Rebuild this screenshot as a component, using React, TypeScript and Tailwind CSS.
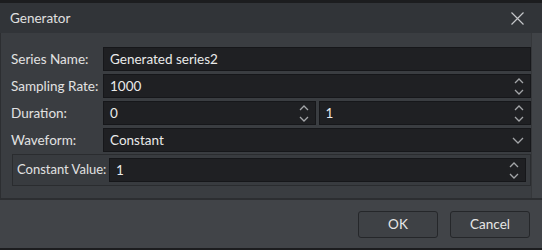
function Spin() {
  return (
    <div className="flex flex-col items-center justify-center gap-[5px] pr-[6px]">
      <svg width="10" height="6" viewBox="0 0 10 6" className="text-[#a3a5a8]">
        <path d="M1 5 L5 1 L9 5" fill="none" stroke="currentColor" strokeWidth="1.3" />
      </svg>
      <svg width="10" height="6" viewBox="0 0 10 6" className="text-[#a3a5a8]">
        <path d="M1 1 L5 5 L9 1" fill="none" stroke="currentColor" strokeWidth="1.3" />
      </svg>
    </div>
  );
}

function Field({ value, spin, drop, className = "" }: { value: string; spin?: boolean; drop?: boolean; className?: string }) {
  return (
    <div
      className={`flex items-center h-[24px] bg-[#1f2023] border border-[#16171a] ${className}`}
    >
      <span className="flex-1 pl-[6px] text-[#eaeaea]">{value}</span>
      {spin && <Spin />}
      {drop && (
        <svg width="12" height="7" viewBox="0 0 12 7" className="mr-[6px] text-[#a3a5a8]">
          <path d="M1 1 L6 6 L11 1" fill="none" stroke="currentColor" strokeWidth="1.3" />
        </svg>
      )}
    </div>
  );
}

function Row({ label, children }: { label: string; children: React.ReactNode }) {
  return (
    <div className="flex items-center">
      <span className="w-[92px] shrink-0 whitespace-nowrap text-[#e2e2e2]">{label}</span>
      <div className="flex-1 flex gap-[3px]">{children}</div>
    </div>
  );
}

export default function App() {
  return (
    <div
      className="w-[542px] h-[250px] flex flex-col bg-[#1c1d1f] text-[13.5px] overflow-hidden"
      style={{ fontFamily: 'Lato, "Noto Sans", sans-serif' }}
    >
      <div className="h-[3px] bg-[#1c1d1f]" />
      <div className="h-[30px] flex items-center justify-between pl-[10px] pr-[18px] bg-[#313438] text-[#e0e0e0]">
        <span>Generator</span>
        <svg width="13" height="13" viewBox="0 0 13 13" className="text-[#c4c6c9]">
          <path d="M0.5 0.5 L12.5 12.5 M12.5 0.5 L0.5 12.5" stroke="currentColor" strokeWidth="1.2" />
        </svg>
      </div>
      <div className="flex-1 flex bg-[#3a3d41] border-l border-[#2c2e31]">
        <div className="flex-1 flex flex-col gap-[3px] pl-[10px] pt-[14px]">
          <Row label="Series Name:">
            <Field value="Generated series2" className="flex-1" />
          </Row>
          <Row label="Sampling Rate:">
            <Field value="1000" spin className="flex-1" />
          </Row>
          <Row label="Duration:">
            <Field value="0" spin className="flex-1" />
            <Field value="1" spin className="flex-1" />
          </Row>
          <Row label="Waveform:">
            <Field value="Constant" drop className="flex-1" />
          </Row>
          <div className="flex items-center mt-[-1px] ml-[1px] h-[32px] border border-[#2a2c2f] bg-[#383b3f] pl-[4px] pr-[4px]">
            <span className="w-[92px] shrink-0 whitespace-nowrap text-[13px] text-[#e2e2e2]">Constant Value:</span>
            <Field value="1" spin className="flex-1 h-[24px]" />
          </div>
        </div>
        <div className="w-[11px] bg-[#404347] border-l border-[#35373a]" />
      </div>
      <div className="h-[52px] flex items-center justify-end gap-[12px] pr-[12px] bg-[#414448] border-t-2 border-[#2c2e31] border-b-2 border-b-[#1c1d1f]">
        <button className="w-[80px] h-[27px] rounded-[3px] border border-[#25272a] bg-[#3e4145] text-[#e6e6e6]">
          OK
        </button>
        <button className="w-[80px] h-[27px] rounded-[3px] border border-[#25272a] bg-[#3e4145] text-[#e6e6e6]">
          Cancel
        </button>
      </div>
    </div>
  );
}
